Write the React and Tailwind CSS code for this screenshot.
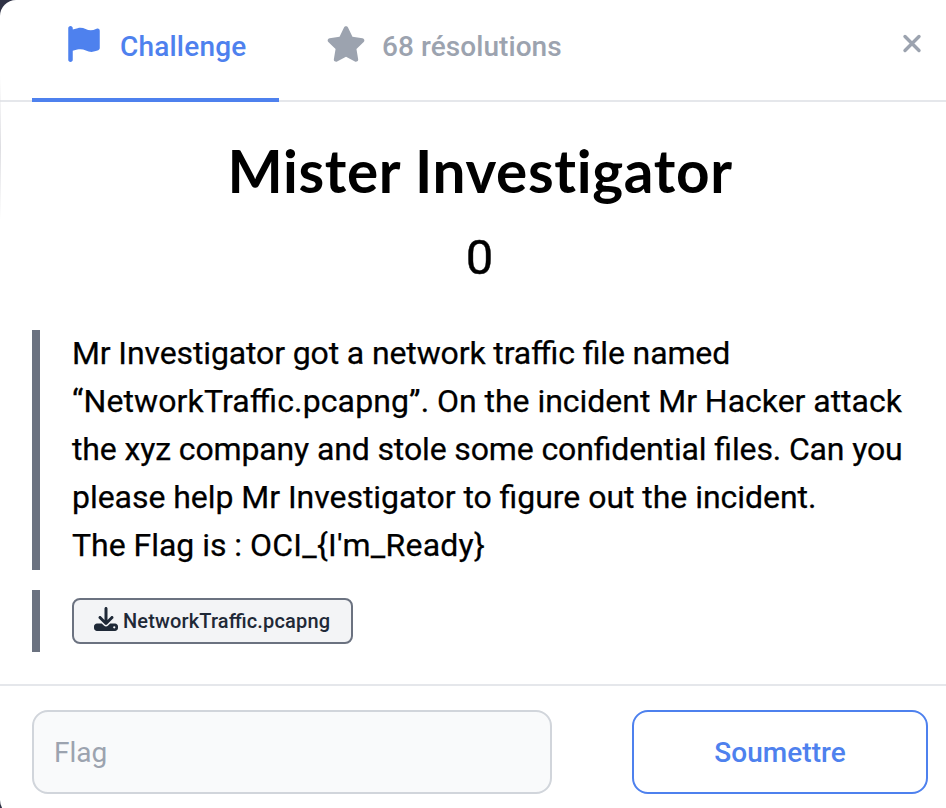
import React from "react";
import { FaFlag, FaStar, FaDownload } from "react-icons/fa6";

export default function App() {
  return (
    <div className="relative h-[808px] w-[946px] overflow-hidden bg-[#2f3245] font-['Roboto',sans-serif]">
      <div className="flex h-[816px] w-[966px] flex-col rounded-[16px] bg-white">
        <header className="flex h-[102px] w-[946px] shrink-0 border-b-2 border-[#e5e7eb] pl-8">
          <div className="-mb-0.5 flex w-[247px] items-start border-b-4 border-[#4e81ee] pl-[36px] pt-[26px] text-[28px] font-medium leading-10 text-[#4e81ee]">
            <FaFlag className="h-9 w-8" />
            <span className="ml-5 mt-px tracking-[0.2px]">Challenge</span>
          </div>
          <div className="ml-[47px] flex items-start pt-[26px] text-[28px] font-medium leading-10 text-[#9ca3af]">
            <FaStar className="h-9 w-10" />
            <span className="ml-4 mt-px tracking-[0.07px]">68 résolutions</span>
          </div>
          <svg className="ml-auto mr-[24px] mt-[34px] h-5 w-5" viewBox="0 0 20 20" fill="none" stroke="#9ca3af" strokeWidth="3.4" strokeLinecap="round">
            <path d="M3 2.5l14 14M17 2.5L3 16.5" />
          </svg>
        </header>
        <main className="flex h-[582px] w-[946px] shrink-0 flex-col">
          <h1 className="mt-[38px] pl-[14px] text-center font-['Lato',sans-serif] text-[58.5px] font-bold leading-[60px] tracking-[0.65px] text-black">Mister Investigator</h1>
          <p className="mt-[34px] pl-[13px] text-center text-[49px] leading-[48px] text-black [-webkit-text-stroke:0.4px_black]">0</p>
          <blockquote className="ml-8 mt-[48px] h-[240px] border-l-8 border-[#6b7280] pl-8 text-[32px] leading-[48px] text-black whitespace-nowrap [-webkit-text-stroke:0.25px_black] [font-feature-settings:'liga'_1]">
            <div className="-mt-px">
              <span className="tracking-[-0.125px]">Mr Investigator got a network traffic file named</span><br />
              <span className="tracking-[0.12px]">“NetworkTraffic.pcapng”</span><span className="tracking-[-0.03px]">. On the incident Mr Hacker attack</span><br />
              <span className="tracking-[-0.13px]">the xyz company and stole some confidential files. Can you</span><br />
              <span className="tracking-[-0.04px]">please help Mr Investigator to figure out the incident.</span><br />
              <span className="tracking-[-0.03px]">The Flag is : </span><span className="tracking-[0.25px]">OCI_&#123;I'm_Ready&#125;</span>
            </div>
          </blockquote>
          <div className="ml-8 mt-5 flex h-[62px] items-start border-l-8 border-[#6b7280] pl-8 pt-2">
            <button className="flex h-[46px] w-[281px] items-center rounded-[8px] border-2 border-[#6b7280] bg-[#f3f4f6] pl-5 text-[20px] font-medium text-[#1f2937]">
              <FaDownload className="-mt-1 h-6 w-6" />
              <span className="ml-[5px] tracking-[0.15px] [font-feature-settings:'liga'_1]">NetworkTraffic.pcapng</span>
            </button>
          </div>
        </main>
        <footer className="flex w-[946px] grow border-t-2 border-[#e5e7eb] pl-8 pt-6">
          <input
            placeholder="Flag"
            className="h-[84px] w-[520px] rounded-[16px] border-2 border-[#d1d5db] bg-[#f9fafb] px-5 text-[28px] placeholder:text-[#9ca3af]"
          />
          <button className="ml-20 h-[84px] w-[296px] rounded-[16px] border-2 border-[#4e81ee] bg-white pt-0.5 text-[28px] font-medium text-[#4e81ee] tracking-[0.05px]">
            Soumettre
          </button>
        </footer>
      </div>
      <div className="absolute left-0 top-[76px] h-[144px] w-px bg-linear-to-b from-transparent via-[#dedee2] to-transparent" />
    </div>
  );
}
